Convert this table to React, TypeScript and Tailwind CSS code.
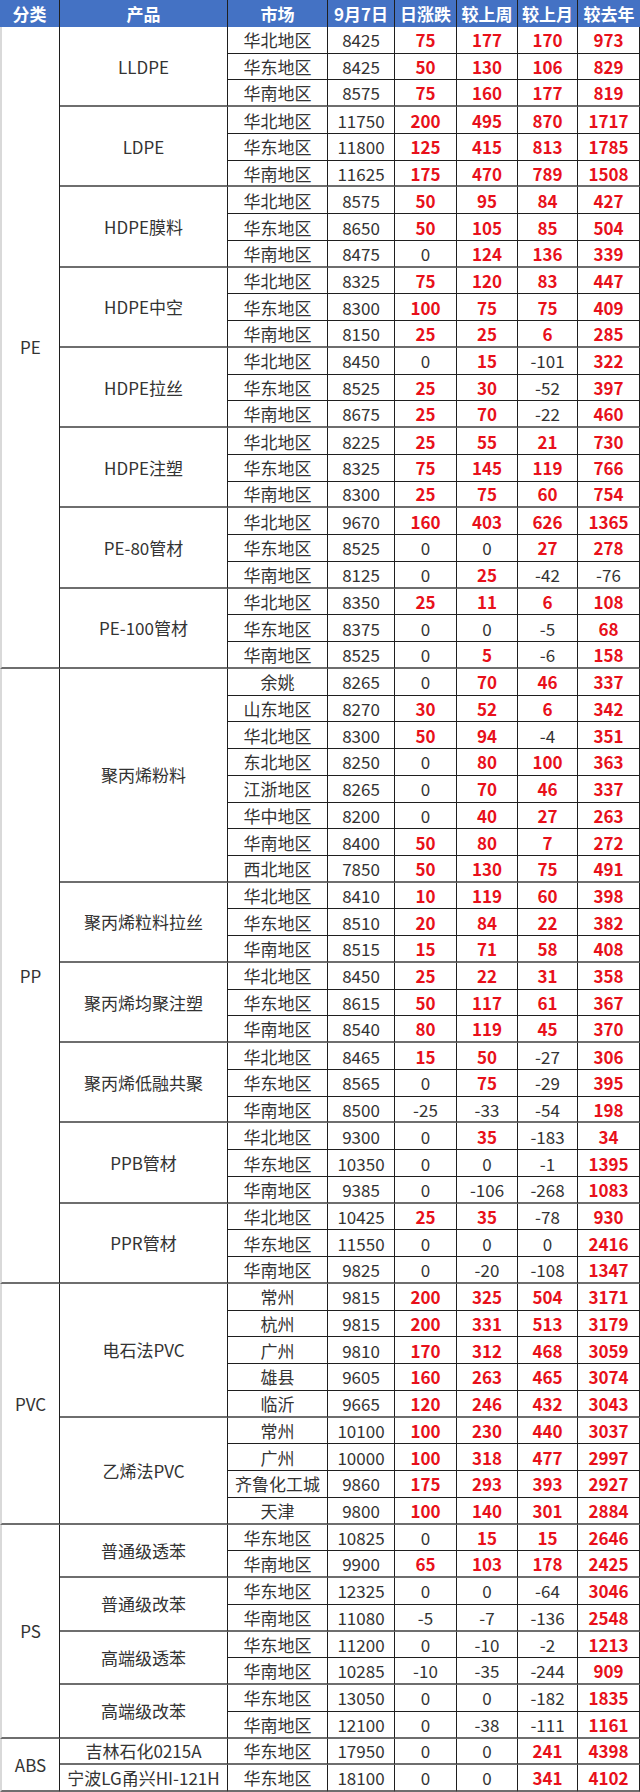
import React from "react";

type Row = [string, number, number, number, number, number];
type Product = { name: string; rows: Row[] };
type Category = { name: string; products: Product[] };

const N = "华北地区";
const E = "华东地区";
const S = "华南地区";

const data: Category[] = [
  {
    name: "PE",
    products: [
      { name: "LLDPE", rows: [[N, 8425, 75, 177, 170, 973], [E, 8425, 50, 130, 106, 829], [S, 8575, 75, 160, 177, 819]] },
      { name: "LDPE", rows: [[N, 11750, 200, 495, 870, 1717], [E, 11800, 125, 415, 813, 1785], [S, 11625, 175, 470, 789, 1508]] },
      { name: "HDPE膜料", rows: [[N, 8575, 50, 95, 84, 427], [E, 8650, 50, 105, 85, 504], [S, 8475, 0, 124, 136, 339]] },
      { name: "HDPE中空", rows: [[N, 8325, 75, 120, 83, 447], [E, 8300, 100, 75, 75, 409], [S, 8150, 25, 25, 6, 285]] },
      { name: "HDPE拉丝", rows: [[N, 8450, 0, 15, -101, 322], [E, 8525, 25, 30, -52, 397], [S, 8675, 25, 70, -22, 460]] },
      { name: "HDPE注塑", rows: [[N, 8225, 25, 55, 21, 730], [E, 8325, 75, 145, 119, 766], [S, 8300, 25, 75, 60, 754]] },
      { name: "PE-80管材", rows: [[N, 9670, 160, 403, 626, 1365], [E, 8525, 0, 0, 27, 278], [S, 8125, 0, 25, -42, -76]] },
      { name: "PE-100管材", rows: [[N, 8350, 25, 11, 6, 108], [E, 8375, 0, 0, -5, 68], [S, 8525, 0, 5, -6, 158]] },
    ],
  },
  {
    name: "PP",
    products: [
      {
        name: "聚丙烯粉料",
        rows: [
          ["余姚", 8265, 0, 70, 46, 337],
          ["山东地区", 8270, 30, 52, 6, 342],
          [N, 8300, 50, 94, -4, 351],
          ["东北地区", 8250, 0, 80, 100, 363],
          ["江浙地区", 8265, 0, 70, 46, 337],
          ["华中地区", 8200, 0, 40, 27, 263],
          [S, 8400, 50, 80, 7, 272],
          ["西北地区", 7850, 50, 130, 75, 491],
        ],
      },
      { name: "聚丙烯粒料拉丝", rows: [[N, 8410, 10, 119, 60, 398], [E, 8510, 20, 84, 22, 382], [S, 8515, 15, 71, 58, 408]] },
      { name: "聚丙烯均聚注塑", rows: [[N, 8450, 25, 22, 31, 358], [E, 8615, 50, 117, 61, 367], [S, 8540, 80, 119, 45, 370]] },
      { name: "聚丙烯低融共聚", rows: [[N, 8465, 15, 50, -27, 306], [E, 8565, 0, 75, -29, 395], [S, 8500, -25, -33, -54, 198]] },
      { name: "PPB管材", rows: [[N, 9300, 0, 35, -183, 34], [E, 10350, 0, 0, -1, 1395], [S, 9385, 0, -106, -268, 1083]] },
      { name: "PPR管材", rows: [[N, 10425, 25, 35, -78, 930], [E, 11550, 0, 0, 0, 2416], [S, 9825, 0, -20, -108, 1347]] },
    ],
  },
  {
    name: "PVC",
    products: [
      {
        name: "电石法PVC",
        rows: [
          ["常州", 9815, 200, 325, 504, 3171],
          ["杭州", 9815, 200, 331, 513, 3179],
          ["广州", 9810, 170, 312, 468, 3059],
          ["雄县", 9605, 160, 263, 465, 3074],
          ["临沂", 9665, 120, 246, 432, 3043],
        ],
      },
      {
        name: "乙烯法PVC",
        rows: [
          ["常州", 10100, 100, 230, 440, 3037],
          ["广州", 10000, 100, 318, 477, 2997],
          ["齐鲁化工城", 9860, 175, 293, 393, 2927],
          ["天津", 9800, 100, 140, 301, 2884],
        ],
      },
    ],
  },
  {
    name: "PS",
    products: [
      { name: "普通级透苯", rows: [[E, 10825, 0, 15, 15, 2646], [S, 9900, 65, 103, 178, 2425]] },
      { name: "普通级改苯", rows: [[E, 12325, 0, 0, -64, 3046], [S, 11080, -5, -7, -136, 2548]] },
      { name: "高端级透苯", rows: [[E, 11200, 0, -10, -2, 1213], [S, 10285, -10, -35, -244, 909]] },
      { name: "高端级改苯", rows: [[E, 13050, 0, 0, -182, 1835], [S, 12100, 0, -38, -111, 1161]] },
    ],
  },
  {
    name: "ABS",
    products: [
      { name: "吉林石化0215A", rows: [[E, 17950, 0, 0, 241, 4398]] },
      { name: "宁波LG甬兴HI-121H", rows: [[E, 18100, 0, 0, 341, 4102]] },
    ],
  },
];

const span: Record<number, string> = {
  1: "row-span-1",
  2: "row-span-2",
  3: "row-span-3",
  4: "row-span-4",
  5: "row-span-5",
  8: "row-span-8",
  9: "row-span-9",
  23: "row-span-23",
  24: "row-span-24",
};

const headers = ["分类", "产品", "市场", "9月7日", "日涨跌", "较上周", "较上月", "较去年"];

const cell = "flex items-center justify-center border-r border-b border-[#1f1f1f]";
const groupEnd = "border-b-2 border-b-[#6e6e6e]";

function Num({ v, end }: { v: number; end: boolean }) {
  const up = v > 0;
  return (
    <div className={`${cell} ${end ? groupEnd : ""} ${up ? "text-[#e8101a] font-semibold" : "text-[#333]"}`}>
      {v}
    </div>
  );
}

export default function App() {
  return (
    <div
      className="w-[640px] h-[1792px] bg-white grid grid-cols-[60px_168px_100px_67px_62px_61px_60px_62px] grid-rows-[27px_repeat(66,minmax(0,1fr))] text-[17px] leading-none"
      style={{ fontFamily: '"Noto Sans CJK SC", "Noto Sans", sans-serif' }}
    >
      {headers.map((h, i) => (
        <div
          key={h}
          className={`flex items-center justify-center bg-[#4472c4] text-white font-bold ${i < 7 ? "border-r border-[#1f1f1f]" : ""}`}
        >
          {h}
        </div>
      ))}
      {data.map((cat) => {
        const total = cat.products.reduce((n, p) => n + p.rows.length, 0);
        return (
          <React.Fragment key={cat.name}>
            <div className={`${span[total]} flex items-center justify-center border-l-2 border-l-[#d9d9d9] border-r border-r-[#1f1f1f] border-b-2 border-b-[#6e6e6e] text-[#333]`}>
              {cat.name}
            </div>
            {cat.products.map((p) =>
              p.rows.map((r, ri) => {
                const end = ri === p.rows.length - 1;
                return (
                  <React.Fragment key={p.name + ri}>
                    {ri === 0 && (
                      <div className={`${span[p.rows.length]} ${cell} ${groupEnd} text-[#333] whitespace-nowrap`}>
                        {p.name}
                      </div>
                    )}
                    <div className={`${cell} ${end ? groupEnd : ""} text-[#333]`}>{r[0]}</div>
                    <div className={`${cell} ${end ? groupEnd : ""} text-[#333]`}>{r[1]}</div>
                    <Num v={r[2]} end={end} />
                    <Num v={r[3]} end={end} />
                    <Num v={r[4]} end={end} />
                    <Num v={r[5]} end={end} />
                  </React.Fragment>
                );
              })
            )}
          </React.Fragment>
        );
      })}
    </div>
  );
}
